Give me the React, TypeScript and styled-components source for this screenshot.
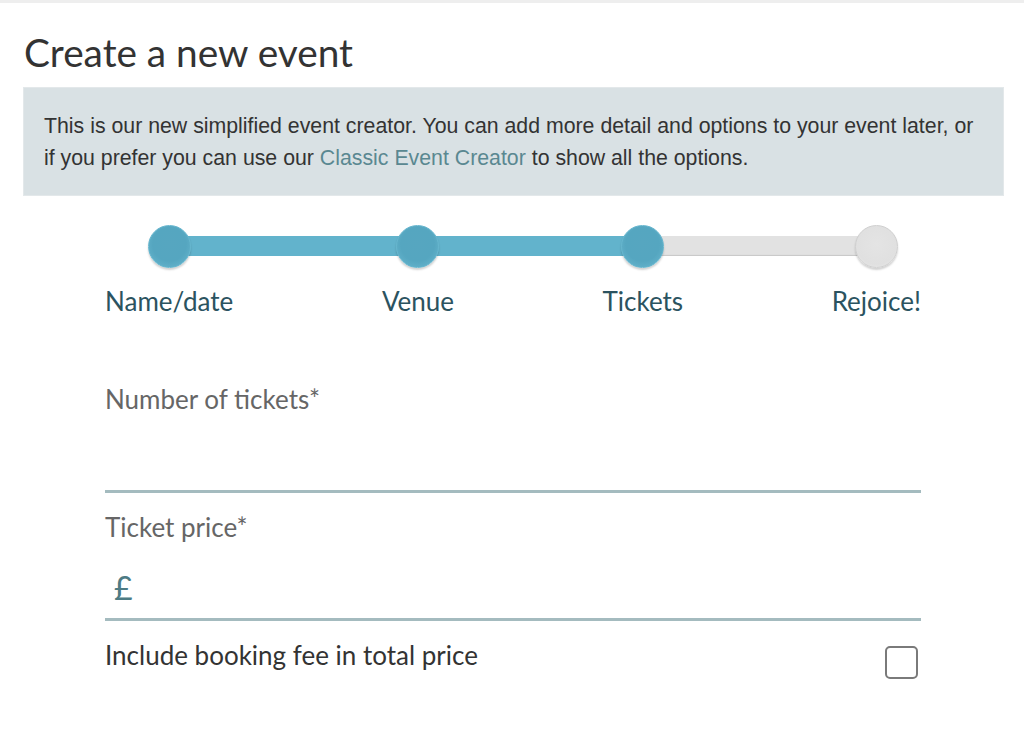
import React from 'react';
import styled, { createGlobalStyle } from 'styled-components';

const GlobalStyle = createGlobalStyle`
  html, body {
    margin: 0;
    padding: 0;
    background: #ffffff;
  }
  body {
    font-family: Lato, "Liberation Sans", sans-serif;
  }
`;

const Page = styled.div`
  width: 1024px;
  height: 746px;
  overflow: hidden;
  background: #ffffff;
  border-top: 3px solid #eeeeee;
  box-sizing: border-box;
`;

const Content = styled.main`
  padding: 0 20px 0 23px;
`;

const Title = styled.h1`
  margin: 24px 0 0 1px;
  font-family: Lato, sans-serif;
  font-weight: 400;
  font-size: 38.8px;
  line-height: 50px;
  color: #333333;
`;

const Notice = styled.div`
  margin-top: 10px;
  background: #d9e1e4;
  border: 1px solid #e3e8ea;
  padding: 22px 20px 21px;
  font-family: "Liberation Sans", Arial, sans-serif;
  font-size: 21.3px;
  line-height: 32px;
  color: #333333;
  white-space: nowrap;
`;

const NoticeLink = styled.a`
  color: #5a8891;
  text-decoration: none;
`;

const Steps = styled.div`
  position: relative;
  margin: 28px 83px 0 82px;
  display: flex;
  justify-content: space-between;
`;

const Track = styled.div`
  position: absolute;
  top: 12px;
  left: 63px;
  right: 46px;
  height: 20px;
  background: #e2e2e2;
  box-shadow: inset 0 -1px 1px rgba(0, 0, 0, 0.12);
  overflow: hidden;
`;

const TrackFill = styled.div<{ $percent: number }>`
  height: 100%;
  width: ${(p) => p.$percent}%;
  background: #62b3cc;
`;

const Step = styled.div`
  position: relative;
  display: flex;
  flex-direction: column;
  align-items: center;
`;

const Dot = styled.div<{ $done: boolean }>`
  width: 43px;
  height: 43px;
  margin-top: 1px;
  border-radius: 50%;
  box-sizing: border-box;
  border: 1px solid ${(p) => (p.$done ? '#66b6ce' : '#cfcfcf')};
  background: ${(p) =>
    p.$done
      ? 'radial-gradient(circle at 50% 45%, #56a6c0 0%, #55a6c0 55%, #6cbad2 100%)'
      : 'radial-gradient(circle at 50% 45%, #e4e4e4 0%, #e0e0e0 65%, #eeeeee 100%)'};
  box-shadow: 0 2px 2px rgba(0, 0, 0, 0.18);
`;

const StepLabel = styled.div`
  margin-top: 17px;
  font-family: Lato, sans-serif;
  font-size: 26px;
  line-height: 32px;
  color: #2b5360;
  white-space: nowrap;
`;

const Form = styled.form`
  margin: 66px 83px 0 82px;
`;

const Field = styled.div`
  display: flex;
  flex-direction: column;
`;

const FieldLabel = styled.label`
  font-family: Lato, sans-serif;
  font-size: 26px;
  line-height: 32px;
  color: #666666;
`;

const InputRow = styled.div`
  display: flex;
  align-items: flex-end;
  height: 75px;
  border-bottom: 3px solid #a4bbbf;
  margin-bottom: 18px;
`;

const Currency = styled.span`
  padding-left: 9px;
  padding-bottom: 14px;
  font-family: Lato, sans-serif;
  font-size: 32px;
  line-height: 32px;
  color: #4d7b84;
`;

const Input = styled.input`
  flex: 1;
  align-self: stretch;
  border: none;
  outline: none;
  background: transparent;
  font-family: Lato, sans-serif;
  font-size: 24px;
  color: #333333;
`;

const CheckRow = styled.div`
  display: flex;
  justify-content: space-between;
  align-items: flex-start;
  padding-right: 3px;
`;

const CheckLabel = styled.label`
  font-family: Lato, sans-serif;
  font-size: 26px;
  line-height: 32px;
  color: #333333;
`;

const CheckBox = styled.span`
  margin-top: 7px;
  width: 33px;
  height: 33px;
  box-sizing: border-box;
  border: 2px solid #7a7a7a;
  border-radius: 5px;
  background: #ffffff;
`;

const steps = ['Name/date', 'Venue', 'Tickets', 'Rejoice!'];
const current = 2;

export default function App() {
  return (
    <>
      <GlobalStyle />
      <Page>
        <Content>
          <Title>Create a new event</Title>
          <Notice>
            This is our new simplified event creator. You can add more detail and options to your event later, or
            <br />
            if you prefer you can use our <NoticeLink href="#">Classic Event Creator</NoticeLink> to show all the options.
          </Notice>

          <Steps>
            <Track>
              <TrackFill $percent={66.8} />
            </Track>
            {steps.map((s, i) => (
              <Step key={s}>
                <Dot $done={i <= current} />
                <StepLabel>{s}</StepLabel>
              </Step>
            ))}
          </Steps>

          <Form>
            <Field>
              <FieldLabel htmlFor="tickets">Number of tickets*</FieldLabel>
              <InputRow>
                <Input id="tickets" type="text" />
              </InputRow>
            </Field>
            <Field>
              <FieldLabel htmlFor="price">Ticket price*</FieldLabel>
              <InputRow>
                <Currency>£</Currency>
                <Input id="price" type="text" />
              </InputRow>
            </Field>
            <CheckRow>
              <CheckLabel>Include booking fee in total price</CheckLabel>
              <CheckBox />
            </CheckRow>
          </Form>
        </Content>
      </Page>
    </>
  );
}
